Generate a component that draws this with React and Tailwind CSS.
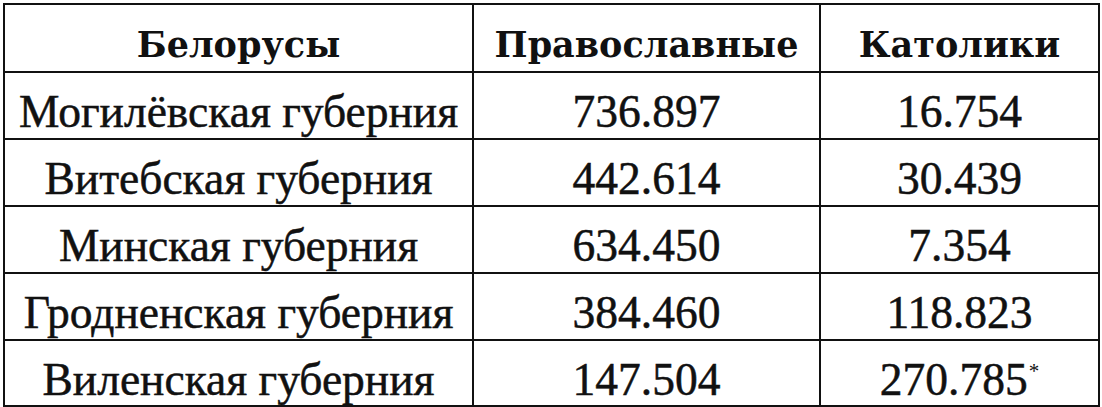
const rows = [
	["Могилёвская губерния", "736.897", "16.754"],
	["Витебская губерния", "442.614", "30.439"],
	["Минская губерния", "634.450", "7.354"],
	["Гродненская губерния", "384.460", "118.823"],
	["Виленская губерния", "147.504", "270.785", true],
];

function Cell({ children, head }) {
	return (
		<div
			className={`bg-white flex items-center justify-center pt-[14px] whitespace-nowrap text-[#111] ${
				head
					? "font-bold text-[35px] font-['DejaVu_Serif',serif]"
					: "text-[45.5px] font-['Liberation_Serif',serif] [-webkit-text-stroke:0.5px_#111]"
			}`}
		>
			{children}
		</div>
	);
}

export default function App() {
	return (
		<div className="w-[1102px] h-[407px] bg-white overflow-hidden pt-[3px] pl-[3px]">
			{/* Table */}
			<div className="grid grid-cols-[467px_345px_277px] grid-rows-[66px_65px_65px_65px_65px_64px] gap-[2px] p-[2px] bg-[#111] w-fit">
				<Cell head>Белорусы</Cell>
				<Cell head>Православные</Cell>
				<Cell head>Католики</Cell>
				{rows.map(([name, orth, cath, note]) => (
					<>
						<Cell key={name}>{name}</Cell>
						<Cell key={name + "o"}>{orth}</Cell>
						<Cell key={name + "c"}>
							{cath}
							{note && (
								<span className="text-[21px] leading-none self-start mt-[6px] ml-[1px] [-webkit-text-stroke:0px]">*</span>
							)}
						</Cell>
					</>
				))}
			</div>
		</div>
	);
}
